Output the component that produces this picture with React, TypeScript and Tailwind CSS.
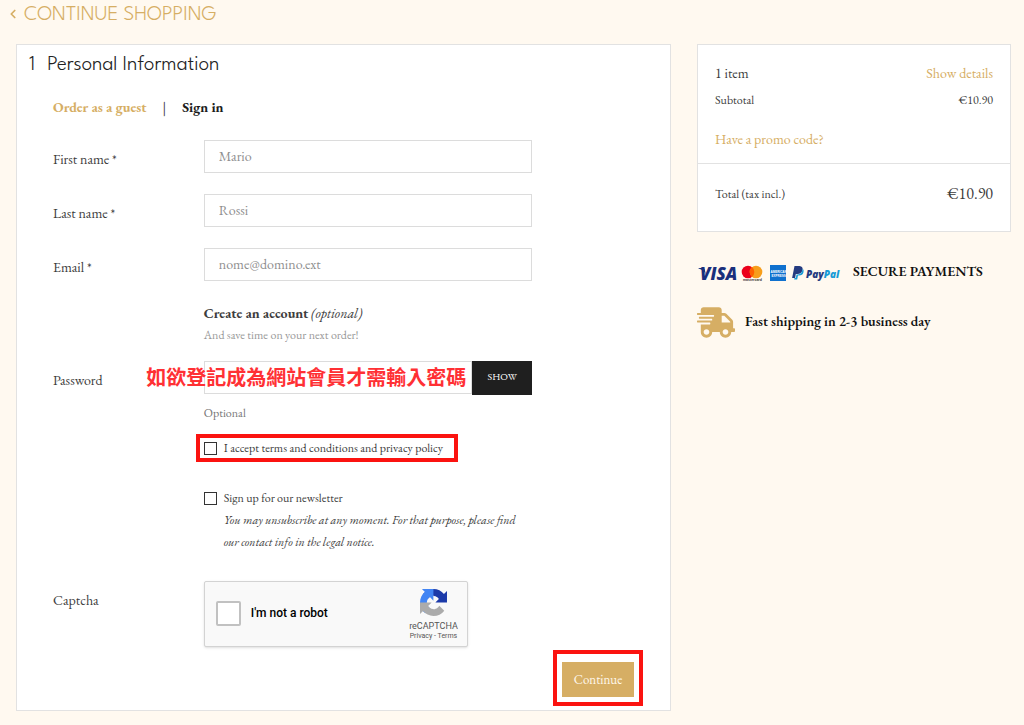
import React, { useState } from 'react'
import { FaShippingFast } from 'react-icons/fa'
import { ChevronLeft } from 'lucide-react'

const row = 'grid grid-cols-[151fr_329fr_138fr]'
const input =
  'block w-full h-[33px] px-3.5 pb-0.5 text-sm text-[#444] bg-white border border-[#dcdcdc] placeholder:text-[#8f8f8f] outline-none'
const tick = 'appearance-none shrink-0 size-[13px] border border-[#333] bg-white checked:bg-[#333]'

const fields = [
  { id: 'firstname', label: 'First name *', placeholder: 'Mario', type: 'text' },
  { id: 'lastname', label: 'Last name *', placeholder: 'Rossi', type: 'text' },
  { id: 'email', label: 'Email *', placeholder: 'nome@domino.ext', type: 'email' },
]

const arrow =
  'M64 31.955c-.002-.46-.012-.918-.033-1.373V4.59l-7.186 7.186C50.9 4.577 41.978 0 31.987 0 21.592 0 12.356 4.953 6.521 12.624l11.779 11.903a15.6 15.6 0 0 1 4.767-5.35c2.055-1.604 4.967-2.916 8.92-2.916.478 0 .846.056 1.117.161 4.898.387 9.143 3.09 11.643 7.013l-8.338 8.338c10.561-.041 22.491-.066 27.591.182'

function RecaptchaLogo() {
  return (
    <svg viewBox="0 0 64 64" className="size-[27px]" aria-hidden="true">
      <path fill="#1c3aa9" d={arrow} />
      <path fill="#4285f4" d={arrow} transform="rotate(-90 32 32)" />
      <path fill="#ababab" d={arrow} transform="rotate(180 32 32)" />
    </svg>
  )
}

function PaymentLogos() {
  return (
    <svg viewBox="0 -4 146 28" className="w-[146px] h-7 shrink-0" role="img" aria-label="Visa, Mastercard, American Express, PayPal">
      <g fontFamily="Open Sans, Liberation Sans, sans-serif" fontStyle="italic">
        <text x="3" y="17" fontSize="17" fontWeight="800" fill="#1a2f7c">VISA</text>
        <text x="109" y="15" fontSize="10" fontWeight="800" fill="#253b80">
          Pay<tspan fill="#179bd7">Pal</tspan>
        </text>
      </g>
      <path d="M1.500 5h4.500q1.500 0 1.800 1.500l1 5q-1.500-4.500-7.300-6z" fill="#1a2f7c" />
      <circle cx="51" cy="9" r="6.3" fill="#eb001b" />
      <circle cx="59" cy="9" r="6.3" fill="#f79e1b" />
      <path d="M55 4.100a6.300 6.300 0 0 1 0 9.800a6.300 6.300 0 0 1 0-9.800z" fill="#ff5f00" />
      <text x="46" y="18" fontSize="3.500" fontFamily="Liberation Sans" fontWeight="700" fill="#333">mastercard</text>
      <rect x="73" y="2" width="16" height="16" fill="#1071ce" />
      <g fontFamily="Liberation Sans" fontWeight="700" fill="#fff" fontSize="3">
        <text x="73.500" y="9.500">AMERICAN</text>
        <text x="74.500" y="13.500">EXPRESS</text>
      </g>
      <g transform="translate(-1 1)">
        <path d="M98.500 2h5q3.800.5 3 4q-.9 4-5.200 4h-1.500l-.7 4h-3z" fill="#253b80" />
        <path d="M106.700 4.800q1.400 1 .8 3.400q-.8 3.300-4.500 3.300h-1l-.8 4h-3l.3-1.500h1.300l.7-3.500h1.300q4.200-.3 4.900-5.700z" fill="#179bd7" />
      </g>
    </svg>
  )
}

function PersonalInformation() {
  const [visible, setVisible] = useState(false)

  return (
    <section className="bg-white border border-[#e2e2e2] pb-1">
      <h1 className="flex gap-3 pt-2 pl-3 text-[21px] leading-6 font-light text-[#222] font-['League_Spartan','Spartan','Jost','Josefin_Sans',Lato,sans-serif]">
        <span>1</span>
        <span>Personal Information</span>
      </h1>

      <nav className="flex items-center pl-9 mt-[18px] text-sm leading-6 font-bold">
        <a href="#guest" className="text-[#d6ae64]">Order as a guest</a>
        <span className="mx-4 font-normal text-[#333]">|</span>
        <a href="#signin" className="text-[#1c1c1c]">Sign in</a>
      </nav>

      <form className="pl-9" onSubmit={(e) => e.preventDefault()}>
        <div className="flex flex-col gap-[21px] mt-[21px]">
          {fields.map((f) => (
            <div key={f.id} className={row}>
              <label htmlFor={f.id} className="pt-[9px] text-sm leading-5">{f.label}</label>
              <input id={f.id} type={f.type} placeholder={f.placeholder} className={input} />
            </div>
          ))}
        </div>

        <div className={row}>
          <div className="col-start-2 pt-5">
            <p className="text-sm leading-6">
              <b>Create an account</b> <i>(optional)</i>
            </p>
            <p className="text-xs leading-5 text-[#999]">And save time on your next order!</p>
          </div>
        </div>

        <div className={row + ' mt-4'}>
          <label htmlFor="password" className="pt-[9px] text-sm leading-5">Password</label>
          <div>
            <div className="relative flex">
              <input id="password" type={visible ? 'text' : 'password'} className={input} />
              <button
                type="button"
                onClick={() => setVisible(!visible)}
                className="shrink-0 w-[60px] h-[34px] pb-1 bg-[#1f1f1f] text-[10px] text-white"
              >
                SHOW
              </button>
              <p className="absolute top-1 right-[66px] whitespace-nowrap text-xl leading-6 font-bold text-[#ff3034] font-['Noto_Sans_CJK_TC',sans-serif]">
                如欲登記成為網站會員才需輸入密碼
              </p>
            </div>
            <p className="mt-2 text-xs leading-5 text-[#777]">Optional</p>
          </div>
        </div>

        <div className={row + ' mt-[15px]'}>
          <div className="col-start-2 flex flex-col items-start">
            <label className="relative flex items-center gap-[7px] text-xs leading-5">
              <input type="checkbox" className={tick} />
              I accept terms and conditions and privacy policy
              <span className="absolute -inset-x-2 -inset-y-1 -right-[15px] border-4 border-[#fb1310]" />
            </label>
            <label className="flex items-center gap-[7px] mt-[29px] text-xs leading-[22px]">
              <input type="checkbox" className={tick} />
              Sign up for our newsletter
            </label>
            <p className="pl-5 text-xs leading-[22px] italic">
              You may unsubscribe at any moment. For that purpose, please find our contact info in the legal notice.
            </p>
          </div>
        </div>

        <div className={row + ' mt-7'}>
          <span className="pt-[9px] text-sm leading-5">Captcha</span>
          <div className="flex items-center w-[264px] h-[66px] pl-[11px] pr-[9px] bg-[#f9f9f9] border border-[#d3d3d3] rounded-xs shadow-sm font-[Roboto,sans-serif]">
            <label className="flex items-center gap-2.5 pb-0.5 text-xs font-medium text-black">
              <input type="checkbox" className="appearance-none size-[25px] bg-white border-2 border-[#c1c1c1] rounded-xs checked:bg-[#4285f4]" />
              I'm not a robot
            </label>
            <div className="ml-auto flex flex-col items-center text-[#555]">
              <RecaptchaLogo />
              <span className="mt-1 text-[9px] leading-3">reCAPTCHA</span>
              <span className="text-[7px] leading-2">
                <a href="#privacy">Privacy</a> - <a href="#terms">Terms</a>
              </span>
            </div>
          </div>
        </div>

        <div className="flex justify-end mt-[3px] pr-[27px]">
          <div className="border-4 border-[#fb1310] px-[5px] pt-2 pb-1">
            <button type="submit" className="w-[72px] h-[35px] mb-px bg-[#d6ae64] text-[13px] text-[#fff8ec]">Continue</button>
          </div>
        </div>
      </form>
    </section>
  )
}

function Summary() {
  return (
    <aside>
      <div className="bg-white border border-[#e2e2e2]">
        <div className="px-[17px] pt-[15px] pb-3 border-b border-[#e2e2e2]">
          <div className="flex justify-between text-sm leading-[26px]">
            <span>1 item</span>
            <a href="#details" className="text-[#d6ae64]">Show details</a>
          </div>
          <div className="flex justify-between text-xs leading-7">
            <span>Subtotal</span>
            <span>€10.90</span>
          </div>
          <a href="#promo" className="block mt-[13px] text-sm leading-6 text-[#d6ae64]">Have a promo code?</a>
        </div>
        <div className="flex items-center justify-between px-[17px] pt-4 pb-6 text-xs">
          <span>Total (tax incl.)</span>
          <span className="text-base leading-[27px]">€10.90</span>
        </div>
      </div>

      <div className="flex items-center gap-2.5 mt-[27px] text-sm font-semibold text-[#111]">
        <PaymentLogos />
        <span className="pb-1">SECURE PAYMENTS</span>
      </div>
      <div className="flex items-center gap-2.5 mt-5 text-sm font-semibold text-[#111]">
        <FaShippingFast className="w-[38px] h-[31px] shrink-0 text-[#d6ae64]" />
        <span className="pb-1">Fast shipping in 2-3 business day</span>
      </div>
    </aside>
  )
}

export default function App() {
  return (
    <div className="min-h-screen bg-[#fff9f0] text-[#3d3d3d] font-['EB_Garamond','Liberation_Serif',serif]">
      <a href="#shop" className="flex items-center h-7 pl-1.5 gap-1 text-[21px] font-light text-[#d6ae64] font-['League_Spartan','Spartan','Jost','Josefin_Sans',Lato,sans-serif]">
        <ChevronLeft className="size-3.5" strokeWidth={3} />
        <span className="pt-1">CONTINUE SHOPPING</span>
      </a>
      <main className="grid grid-cols-[655fr_314fr] items-start gap-[26px] pt-4 pl-4 pr-[13px] pb-3">
        <PersonalInformation />
        <Summary />
      </main>
    </div>
  )
}
